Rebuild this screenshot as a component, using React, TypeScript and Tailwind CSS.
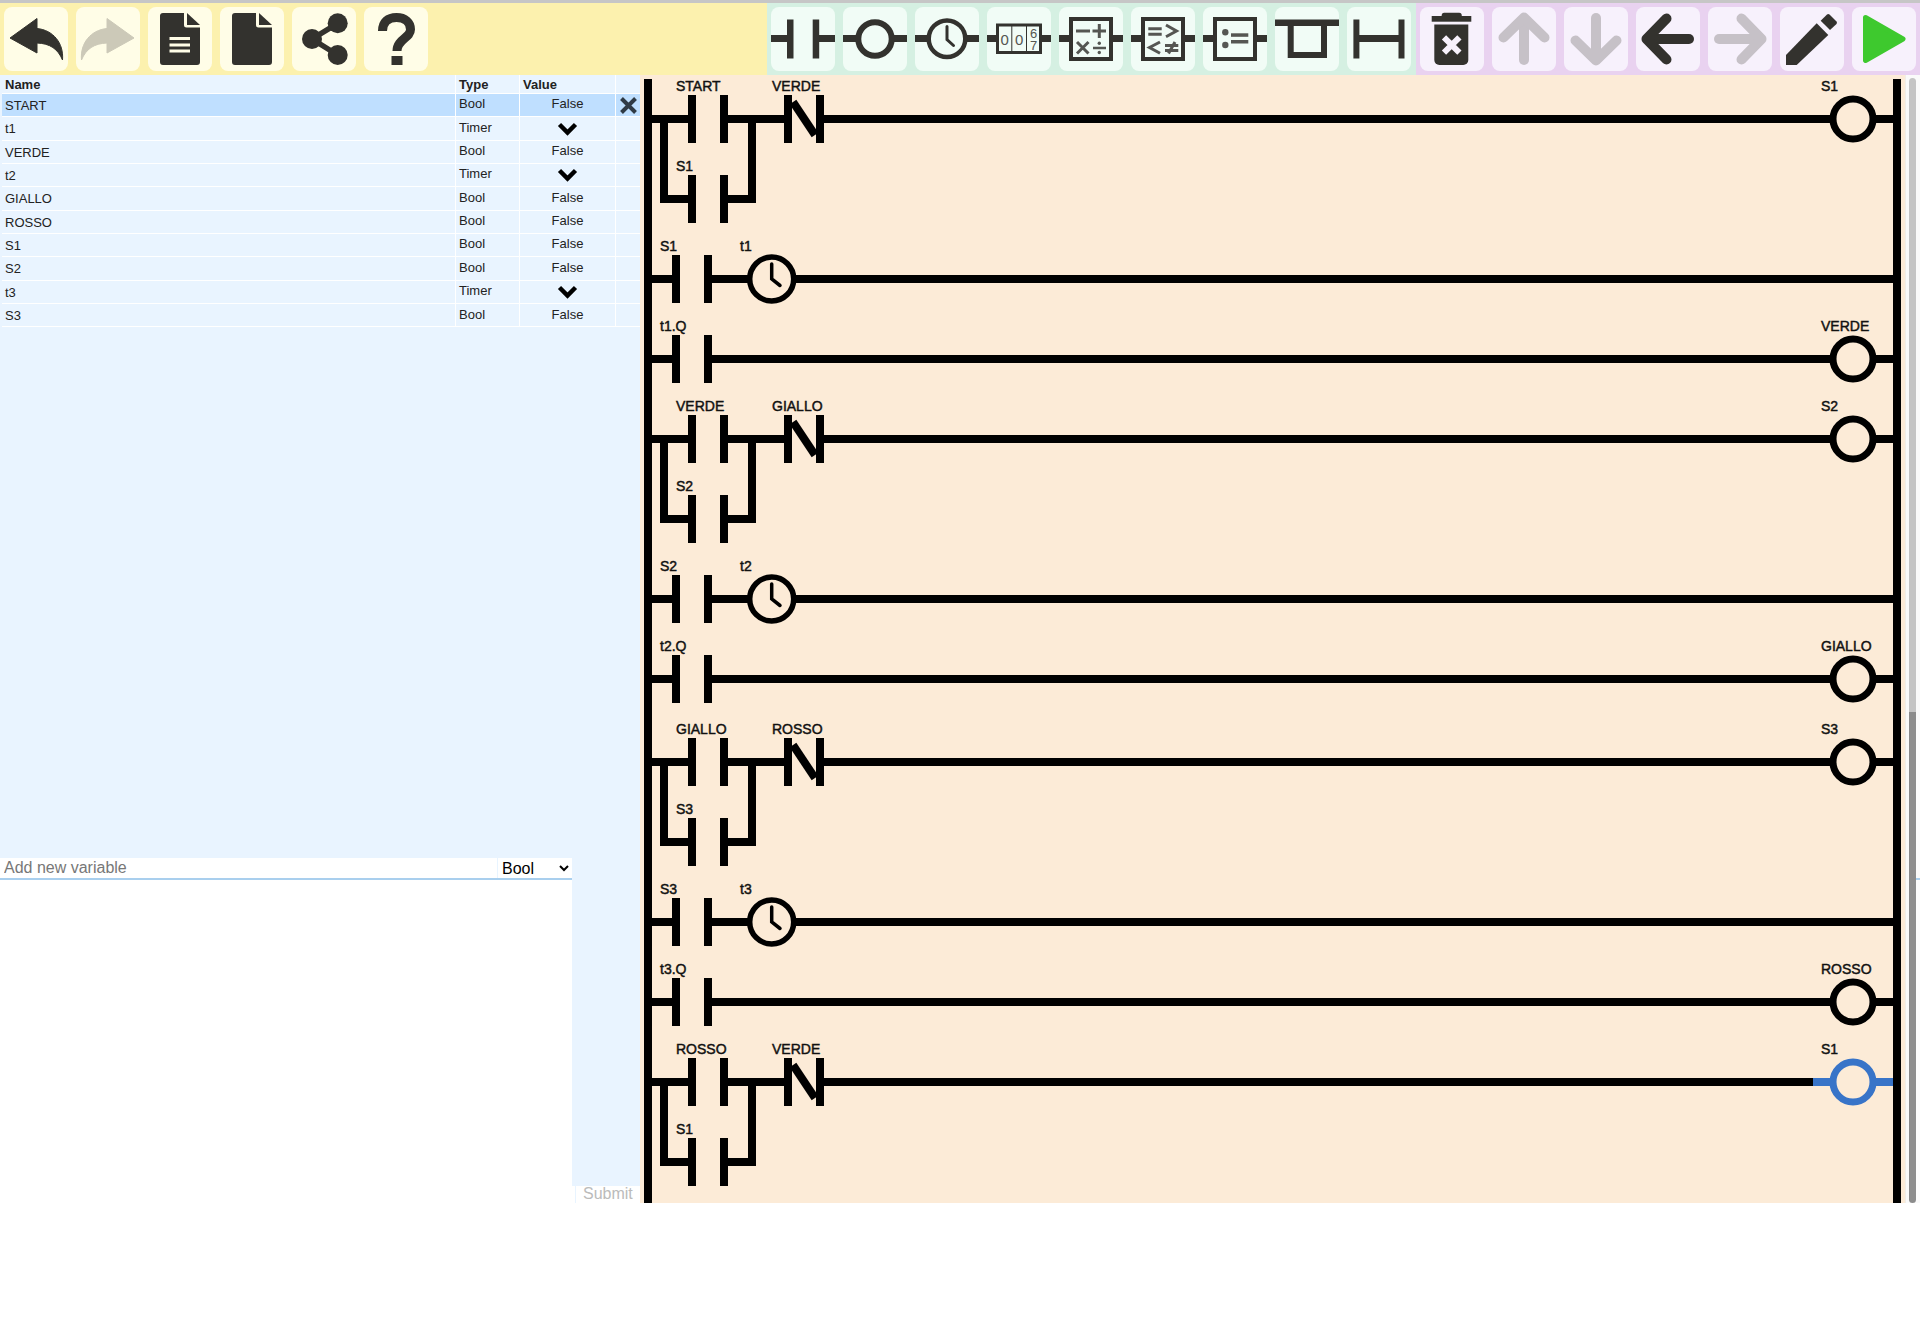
const DARK = "#33322e";
const GREY_Y = "#ccc9b8";
const GREY_P = "#c6c1c7";
const INK = "#555652";

const variables = [
  { name: "START", type: "Bool", selected: true },
  { name: "t1", type: "Timer" },
  { name: "VERDE", type: "Bool" },
  { name: "t2", type: "Timer" },
  { name: "GIALLO", type: "Bool" },
  { name: "ROSSO", type: "Bool" },
  { name: "S1", type: "Bool" },
  { name: "S2", type: "Bool" },
  { name: "t3", type: "Timer" },
  { name: "S3", type: "Bool" },
];

function Icon({ children }: { children: React.ReactNode }) {
  return (
    <svg width="64" height="64" viewBox="0 0 64 64" className="block">
      {children}
    </svg>
  );
}

function Btn({ bg, children }: { bg: string; children: React.ReactNode }) {
  return <button className={`m-1 h-16 w-16 shrink-0 rounded-lg p-0 ${bg}`}>{children}</button>;
}

function Reply({ color, flip }: { color: string; flip?: boolean }) {
  return (
    <Icon>
      <path
        transform={flip ? "translate(64 0) scale(-1 1)" : undefined}
        d="M6 31 L33 11.5 V21.5 C49 23 60 36 58.5 53 C54 42 46 36.5 33 36 V46 Z"
        fill={color}
        stroke={color}
        strokeWidth="1"
        strokeLinejoin="round"
      />
    </Icon>
  );
}

function FileIcon({ lines }: { lines?: boolean }) {
  return (
    <Icon>
      <path
        d="M15 6 H36 V18 a2.5 2.5 0 0 0 2.5 2.5 H52 V55 a3 3 0 0 1 -3 3 H15 a3 3 0 0 1 -3 -3 V9 a3 3 0 0 1 3 -3 Z"
        fill={DARK}
      />
      <path d="M39 6 L52 18 H39 Z" fill={DARK} />
      {lines && (
        <g fill="#fffde7">
          <rect x="21.5" y="30" width="20.5" height="3" />
          <rect x="21.5" y="36.5" width="20.5" height="3" />
          <rect x="21.5" y="42.5" width="20.5" height="3" />
        </g>
      )}
    </Icon>
  );
}

function ShareIcon() {
  return (
    <Icon>
      <path d="M45.7 16.3 L20 32 L45.7 48" fill="none" stroke={DARK} strokeWidth="5.5" />
      <circle cx="20" cy="32" r="10" fill={DARK} />
      <circle cx="45.7" cy="16.3" r="10" fill={DARK} />
      <circle cx="45.7" cy="48" r="10" fill={DARK} />
    </Icon>
  );
}

function HelpIcon() {
  return (
    <Icon>
      <path
        d="M18.5 24 C18.5 15 24 10.5 32.5 10.5 C41 10.5 46.5 15.5 46.5 22.5 C46.5 31 33 32 33 44"
        fill="none"
        stroke={DARK}
        strokeWidth="9"
      />
      <rect x="27.5" y="49" width="11" height="9" fill={DARK} />
    </Icon>
  );
}

function Wire({ from = 0, to = 64 }: { from?: number; to?: number }) {
  return <rect x={from} y="28" width={to - from} height="7" fill={DARK} />;
}

function Boxed({ children }: { children: React.ReactNode }) {
  return (
    <Icon>
      <Wire from={0} to={11} />
      <Wire from={53} to={64} />
      <rect x="12" y="12" width="40" height="40" fill="none" stroke={DARK} strokeWidth="4" />
      {children}
    </Icon>
  );
}

function ContactTool() {
  return (
    <Icon>
      <Wire from={0} to={17} />
      <Wire from={47} to={64} />
      <rect x="16" y="12.5" width="6.5" height="39" fill={DARK} />
      <rect x="41.7" y="12.5" width="6.5" height="39" fill={DARK} />
    </Icon>
  );
}

function CoilTool() {
  return (
    <Icon>
      <Wire from={0} to={18} />
      <Wire from={46} to={64} />
      <circle cx="32" cy="32" r="16.7" fill="none" stroke={DARK} strokeWidth="6" />
    </Icon>
  );
}

function ClockTool() {
  return (
    <Icon>
      <Wire from={0} to={15} />
      <Wire from={49} to={64} />
      <circle cx="32" cy="31.7" r="18.3" fill="none" stroke={DARK} strokeWidth="4.5" />
      <path d="M32 19.5 V32.5 L38.5 38.5" fill="none" stroke={DARK} strokeWidth="3" strokeLinecap="round" />
    </Icon>
  );
}

function CounterTool() {
  return (
    <Icon>
      <Wire from={0} to={11} />
      <Wire from={53} to={64} />
      <rect x="10.5" y="18" width="43" height="27.5" fill="none" stroke={DARK} strokeWidth="3" />
      <rect x="24.3" y="18" width="1" height="27" fill={DARK} />
      <rect x="39" y="18" width="1" height="27" fill={DARK} />
      <g fill={INK} textAnchor="middle">
        <text x="17.7" y="37.5" fontSize="15">0</text>
        <text x="32.2" y="37.5" fontSize="15">0</text>
        <text x="46.7" y="30.5" fontSize="13">6</text>
        <text x="46.7" y="43" fontSize="13">7</text>
      </g>
    </Icon>
  );
}

function MathTool() {
  return (
    <Boxed>
      <g stroke={INK} strokeWidth="3" fill="none">
        <path d="M17 24 H31" />
        <path d="M33.5 24 H47 M40.3 17 V31" />
        <path d="M18 35 L29.5 46.5 M29.5 35 L18 46.5" />
        <path d="M34 41 H47" strokeWidth="2.5" />
      </g>
      <circle cx="40.3" cy="36.3" r="1.7" fill={INK} />
      <circle cx="40.3" cy="45.5" r="1.7" fill={INK} />
    </Boxed>
  );
}

function CompareTool() {
  return (
    <Boxed>
      <g stroke={INK} strokeWidth="3" fill="none">
        <path d="M17.3 21.7 H30.7 M17.3 27.2 H30.7" />
        <path d="M35 18 L45.5 24 L35 29.7" />
        <path d="M29 35 L18.5 40.5 L29 46.3" />
        <path d="M34 38.5 H47.3 M34 43.5 H47.3 M44 35 L37.5 46.5" />
      </g>
    </Boxed>
  );
}

function AssignTool() {
  return (
    <Boxed>
      <circle cx="22.3" cy="25.3" r="3.2" fill={INK} />
      <circle cx="22.3" cy="38" r="3.2" fill={INK} />
      <rect x="28" y="26.3" width="17.3" height="3.5" fill={INK} />
      <rect x="28" y="33" width="17.3" height="3.5" fill={INK} />
    </Boxed>
  );
}

function BranchTool() {
  return (
    <Icon>
      <rect x="0" y="12.5" width="64" height="6.5" fill={DARK} />
      <path d="M15.7 15 V48 H49 V15" fill="none" stroke={DARK} strokeWidth="6" />
    </Icon>
  );
}

function ParallelTool() {
  return (
    <Icon>
      <rect x="6.4" y="12.5" width="6" height="39" fill={DARK} />
      <rect x="51.5" y="12.5" width="6" height="39" fill={DARK} />
      <rect x="12" y="28" width="40" height="7" fill={DARK} />
    </Icon>
  );
}

function TrashIcon() {
  return (
    <Icon>
      <rect x="21.7" y="5.7" width="20" height="6" rx="2.5" fill={DARK} />
      <rect x="11.7" y="9" width="39.6" height="5.7" fill={DARK} />
      <path d="M14.3 17.5 H48.3 V53 a5 5 0 0 1 -5 5 H19.3 a5 5 0 0 1 -5 -5 Z" fill={DARK} />
      <path d="M24 30.3 L39.4 45.7 M39.4 30.3 L24 45.7" stroke="#f7f1fc" strokeWidth="6" />
    </Icon>
  );
}

function Arrow({ color, rotate }: { color: string; rotate: number }) {
  return (
    <Icon>
      <g transform={`rotate(${rotate} 32 32)`} fill="none" stroke={color} strokeWidth="10" strokeLinecap="round" strokeLinejoin="round">
        <path d="M32 53 V12" />
        <path d="M11.5 30.5 L32 10.5 L52.5 30.5" />
      </g>
    </Icon>
  );
}

function PencilIcon() {
  return (
    <Icon>
      <path d="M6 48 L36.7 16.3 L48.3 28 L16.7 58 H6 Z" fill={DARK} />
      <path d="M40.7 13.7 L47 7.5 a2 2 0 0 1 2.5 0 L56.5 14.5 a2 2 0 0 1 0 2.5 L50 23 Z" fill={DARK} />
    </Icon>
  );
}

function PlayIcon() {
  return (
    <Icon>
      <path d="M13.5 10.5 L51 32 L13.5 53.5 Z" fill="#3ec92e" stroke="#3ec92e" strokeWidth="5" strokeLinejoin="round" />
    </Icon>
  );
}

function Toolbar() {
  const y = "bg-[#fffde7]";
  const g = "bg-[#f1fcf6]";
  const p = "bg-[#f7f1fc]";
  return (
    <div className="flex h-[72px]">
      <div className="flex w-[767px] bg-[#fcf1ae]">
        <Btn bg={y}><Reply color={DARK} /></Btn>
        <Btn bg={y}><Reply color={GREY_Y} flip /></Btn>
        <Btn bg={y}><FileIcon lines /></Btn>
        <Btn bg={y}><FileIcon /></Btn>
        <Btn bg={y}><ShareIcon /></Btn>
        <Btn bg={y}><HelpIcon /></Btn>
      </div>
      <div className="flex w-[649px] bg-[#d5f0e2]">
        <Btn bg={g}><ContactTool /></Btn>
        <Btn bg={g}><CoilTool /></Btn>
        <Btn bg={g}><ClockTool /></Btn>
        <Btn bg={g}><CounterTool /></Btn>
        <Btn bg={g}><MathTool /></Btn>
        <Btn bg={g}><CompareTool /></Btn>
        <Btn bg={g}><AssignTool /></Btn>
        <Btn bg={g}><BranchTool /></Btn>
        <Btn bg={g}><ParallelTool /></Btn>
      </div>
      <div className="flex w-[504px] bg-[#e9d2f0]">
        <Btn bg={p}><TrashIcon /></Btn>
        <Btn bg={p}><Arrow color={GREY_P} rotate={0} /></Btn>
        <Btn bg={p}><Arrow color={GREY_P} rotate={180} /></Btn>
        <Btn bg={p}><Arrow color={DARK} rotate={-90} /></Btn>
        <Btn bg={p}><Arrow color={GREY_P} rotate={90} /></Btn>
        <Btn bg={p}><PencilIcon /></Btn>
        <Btn bg={p}><PlayIcon /></Btn>
      </div>
    </div>
  );
}

function VariableRow({ name, type, selected }: { name: string; type: string; selected?: boolean }) {
  return (
    <div className={`flex h-[23.35px] border-b border-white text-[13px] text-[#222] ${selected ? "bg-[#bfdfff]" : ""}`}>
      <div className="flex w-[454px] items-center border-r border-white pl-[3px] pt-[1px]">{name}</div>
      <div className="flex w-[64px] items-center border-r border-white pb-[2px] pl-[3px]">{type}</div>
      <div className="flex w-[96px] items-center justify-center border-r border-white pb-[2px]">
        {type === "Timer" ? (
          <svg width="21" height="14" viewBox="0 0 21 14" className="mt-[2px]">
            <path d="M2.5 2.5 L10.5 10.5 L18.5 2.5" fill="none" stroke="#000" strokeWidth="4.5" />
          </svg>
        ) : (
          "False"
        )}
      </div>
      <div className="flex flex-1 items-center justify-center">
        {selected && (
          <svg width="19" height="17" viewBox="0 0 19 17">
            <path d="M2.5 1.5 L16.5 15.5 M16.5 1.5 L2.5 15.5" stroke="#2f3a46" strokeWidth="4" />
          </svg>
        )}
      </div>
    </div>
  );
}

function VariablePanel() {
  return (
    <div className="flex w-[640px] shrink-0 flex-col bg-[#e9f4ff]">
      <div className="h-[783px] pl-[2px]">
        <div className="flex h-[19px] items-center border-b border-white text-[13px] font-bold text-[#222]">
          <div className="h-full w-[454px] border-r border-white pl-[3px]">Name</div>
          <div className="h-full w-[64px] border-r border-white pl-[3px]">Type</div>
          <div className="h-full w-[96px] border-r border-white pl-[3px]">Value</div>
        </div>
        {variables.map((v) => (
          <VariableRow key={v.name} {...v} />
        ))}
      </div>
      <div className="flex flex-1">
        <div className="flex w-[572px] flex-col">
          <div className="flex h-[22px] border-b-2 border-[#a9cfee] bg-white">
            <input
              placeholder="Add new variable"
              className="min-w-0 flex-1 pl-[4px] text-[16px] text-black outline-none placeholder:text-[#777]"
            />
            <select className="h-[20px] w-[75px] border-l border-[#e8f4ff] text-[16px] text-black outline-none">
              <option>Bool</option>
            </select>
          </div>
          <textarea className="flex-1 resize-none bg-white outline-none" />
        </div>
        <div className="flex flex-1 flex-col">
          <div className="flex-1" />
          <div className="h-[17px] bg-white pl-[3px]">
            <div className="h-full border-l border-[#e8f4ff] pl-[7px]">
              <button disabled className="block h-[15px] text-left text-[16px] leading-[15px] text-[#bbb]">
                Submit
              </button>
            </div>
          </div>
        </div>
      </div>
    </div>
  );
}

function Bar({ x1, y1, x2, y2, color = "#000" }: { x1: number; y1: number; x2: number; y2: number; color?: string }) {
  return <rect x={x1} y={y1} width={x2 - x1} height={y2 - y1} fill={color} />;
}

function Label({ x, y, children }: { x: number; y: number; children: string }) {
  return (
    <text x={x} y={y - 28.5} fontSize="14" fill="#111" stroke="#111" strokeWidth="0.45">
      {children}
    </text>
  );
}

function Contact({ x, y, label, labelX }: { x: number; y: number; label: string; labelX: number }) {
  return (
    <>
      <Bar x1={x} y1={y - 24} x2={x + 8} y2={y + 24} />
      <Bar x1={x + 32} y1={y - 24} x2={x + 40} y2={y + 24} />
      <Label x={labelX} y={y}>{label}</Label>
    </>
  );
}

function Coil({ y, label, active }: { y: number; label: string; active?: boolean }) {
  const color = active ? "#3874c8" : "#000";
  return (
    <>
      <circle cx="1853" cy={y} r="20" fill="none" stroke={color} strokeWidth="7" />
      <Bar x1={active ? 1813 : 1829} y1={y - 4} x2={1830} y2={y + 4} color={color} />
      <Bar x1={1876} y1={y - 4} x2={1893} y2={y + 4} color={color} />
      <Label x={1821} y={y}>{label}</Label>
    </>
  );
}

// two contacts in parallel, a normally closed one, then the coil
function LatchRung({ y, a, b, hold, coil, active }: { y: number; a: string; b: string; hold: string; coil: string; active?: boolean }) {
  return (
    <>
      <Bar x1={652} y1={y - 4} x2={688} y2={y + 4} />
      <Contact x={688} y={y} label={a} labelX={676} />
      <Bar x1={728} y1={y - 4} x2={784} y2={y + 4} />
      <Contact x={784} y={y} label={b} labelX={772} />
      <path d={`M793 ${y - 17} L815 ${y + 16}`} stroke="#000" strokeWidth="8" />
      <Bar x1={824} y1={y - 4} x2={active ? 1813 : 1830} y2={y + 4} />
      <Bar x1={660} y1={y} x2={668} y2={y + 84} />
      <Bar x1={660} y1={y + 76} x2={688} y2={y + 84} />
      <Contact x={688} y={y + 80} label={hold} labelX={676} />
      <Bar x1={728} y1={y + 76} x2={756} y2={y + 84} />
      <Bar x1={748} y1={y} x2={756} y2={y + 84} />
      <Coil y={y} label={coil} active={active} />
    </>
  );
}

function TimerRung({ y, contact, timer }: { y: number; contact: string; timer: string }) {
  return (
    <>
      <Bar x1={652} y1={y - 4} x2={672} y2={y + 4} />
      <Contact x={672} y={y} label={contact} labelX={660} />
      <Bar x1={712} y1={y - 4} x2={750} y2={y + 4} />
      <circle cx="771.7" cy={y} r="22" fill="none" stroke="#000" strokeWidth="5.5" />
      <path d={`M771.7 ${y - 15} V${y} L780 ${y + 6.5}`} fill="none" stroke="#000" strokeWidth="3.5" strokeLinecap="round" />
      <Bar x1={794} y1={y - 4} x2={1893} y2={y + 4} />
      <Label x={740} y={y}>{timer}</Label>
    </>
  );
}

function OutputRung({ y, contact, coil }: { y: number; contact: string; coil: string }) {
  return (
    <>
      <Bar x1={652} y1={y - 4} x2={672} y2={y + 4} />
      <Contact x={672} y={y} label={contact} labelX={660} />
      <Bar x1={712} y1={y - 4} x2={1830} y2={y + 4} />
      <Coil y={y} label={coil} />
    </>
  );
}

function Ladder() {
  return (
    <svg width="1265" height="1128" viewBox="640 75 1265 1128" className="block shrink-0 bg-[#fcebd7]">
      <Bar x1={644} y1={79} x2={652} y2={1203} />
      <Bar x1={1893} y1={79} x2={1901} y2={1203} />
      <LatchRung y={119} a="START" b="VERDE" hold="S1" coil="S1" />
      <TimerRung y={279} contact="S1" timer="t1" />
      <OutputRung y={359} contact="t1.Q" coil="VERDE" />
      <LatchRung y={439} a="VERDE" b="GIALLO" hold="S2" coil="S2" />
      <TimerRung y={599} contact="S2" timer="t2" />
      <OutputRung y={679} contact="t2.Q" coil="GIALLO" />
      <LatchRung y={762} a="GIALLO" b="ROSSO" hold="S3" coil="S3" />
      <TimerRung y={922} contact="S3" timer="t3" />
      <OutputRung y={1002} contact="t3.Q" coil="ROSSO" />
      <LatchRung y={1082} a="ROSSO" b="VERDE" hold="S1" coil="S1" active />
    </svg>
  );
}

function Gutter() {
  return (
    <div className="relative w-[15px] border-l border-[#f0eee8] bg-[#fafafa]">
      <div className="absolute left-[3px] top-[3px] h-[634px] w-[7px] rounded-t bg-[#c4c4c4]" />
      <div className="absolute left-[9px] top-[803px] h-[2px] w-[5px] bg-[#a9cfee]" />
      <div className="absolute bottom-0 left-[3px] top-[637px] w-[6.5px] rounded-b bg-[#8c8c8c]" />
    </div>
  );
}

export default function App() {
  return (
    <div className="h-[1322px] w-[1920px] overflow-hidden bg-white [font-family:'Liberation_Sans',sans-serif]">
      <div className="h-[3px] bg-[#c6c6c6]" />
      <Toolbar />
      <div className="flex h-[1128px]">
        <VariablePanel />
        <Ladder />
        <Gutter />
      </div>
    </div>
  );
}
